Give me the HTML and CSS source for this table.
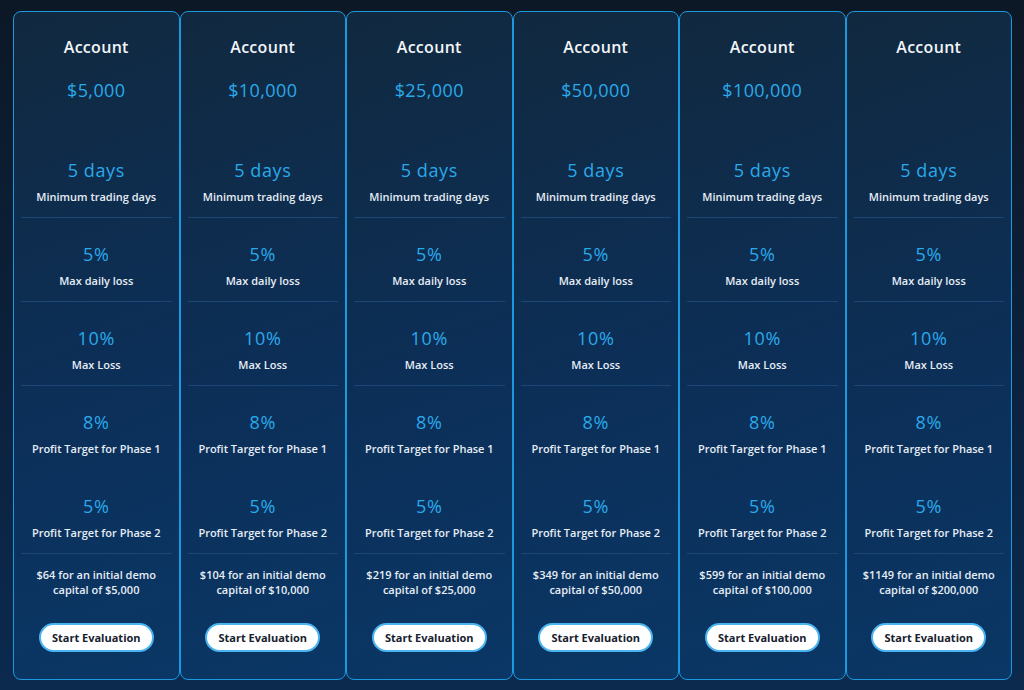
FILE: index.html
```html
<!DOCTYPE html>
<html lang="en">
<head>
  <meta charset="UTF-8" />
  <meta name="viewport" content="width=device-width, initial-scale=1.0"/>
  <title>Evaluation Plans</title>
  <link rel="stylesheet" href="styles.css">
</head>
<body>
  <main class="plans" id="plansContainer"></main>

  <script>
    const plansContainer = document.getElementById('plansContainer');

    const plans = [
      { size: '$5,000', fee: '$64', capital: '$5,000' },
      { size: '$10,000', fee: '$104', capital: '$10,000' },
      { size: '$25,000', fee: '$219', capital: '$25,000' },
      { size: '$50,000', fee: '$349', capital: '$50,000' },
      { size: '$100,000', fee: '$599', capital: '$100,000' },
      { size: '', fee: '$1149', capital: '$200,000' }
    ];

    const rules = [
      { value: '5 days', label: 'Minimum trading days' },
      { value: '5%', label: 'Max daily loss' },
      { value: '10%', label: 'Max Loss' },
      { value: '8%', label: 'Profit Target for Phase 1', plain: true },
      { value: '5%', label: 'Profit Target for Phase 2' }
    ];

    function renderPlans() {
      plansContainer.innerHTML = '';
      plans.forEach(p => {
        const card = document.createElement('div');
        card.className = 'plan-card';
        const rows = rules.map(r => `
          <div class="rule${r.plain ? ' no-line' : ''}">
            <div class="rule-value">${r.value}</div>
            <div class="rule-label">${r.label}</div>
          </div>`).join('');
        card.innerHTML = `
          <div class="plan-head">
            <h2>Account</h2>
            <div class="plan-size">${p.size}</div>
          </div>
          ${rows}
          <p class="plan-fee">${p.fee} for an initial demo capital of ${p.capital}</p>
          <button class="start-btn">Start Evaluation</button>
        `;
        plansContainer.appendChild(card);
      });
    }

    renderPlans();
  </script>
</body>
</html>
```

FILE: styles.css
```css
html, body {
  margin: 0;
  padding: 0;
  height: 100%;
  width: 100%;
  font-family: "Open Sans", Lato, sans-serif;
  background: linear-gradient(180deg, #0d1826 0%, #0c2240 60%, #0b2a4e 100%);
  color: #e8eef6;
  overflow: hidden;
}

.plans {
  display: flex;
  padding: 11px 12px 0 13px;
  box-sizing: border-box;
  height: 680px;
}

.plan-card {
  flex: 1;
  display: flex;
  flex-direction: column;
  align-items: stretch;
  padding: 0 7px;
  border: 1px solid #1b99de;
  border-radius: 8px;
  background: linear-gradient(160deg, #11293f 0%, #0c2f58 55%, #0a3766 100%);
  text-align: center;
  box-sizing: border-box;
}

.plan-head {
  padding-top: 25px;
  height: 97px;
}

.plan-head h2 {
  margin: 0;
  font-size: 16px;
  line-height: 20px;
  font-weight: 600;
  letter-spacing: 0.3px;
  color: #f2f5f8;
}

.plan-size {
  margin-top: 22px;
  height: 22px;
  font-size: 18px;
  line-height: 22px;
  letter-spacing: 0.4px;
  color: #2aa9eb;
}

.rule {
  height: 84px;
  padding-top: 24px;
  box-sizing: border-box;
  border-bottom: 1px solid #1c4676;
}

.rule.no-line {
  border-bottom-color: transparent;
}

.rule-value {
  font-size: 18px;
  line-height: 24px;
  letter-spacing: 0.6px;
  color: #2aa9eb;
}

.rule-label {
  margin-top: 7px;
  font-size: 11px;
  line-height: 16px;
  font-weight: 600;
  color: #e6edf5;
}

.plan-fee {
  margin: 13px 4px 0;
  font-size: 11px;
  line-height: 15px;
  font-weight: 600;
  color: #e6edf5;
}

.start-btn {
  align-self: center;
  margin-top: 26px;
  width: 115px;
  height: 29px;
  border: 2px solid #4ab4f0;
  border-radius: 15px;
  background: #fff;
  color: #18202e;
  font-family: "Open Sans", sans-serif;
  font-weight: 700;
  font-size: 11px;
  cursor: pointer;
}
```
